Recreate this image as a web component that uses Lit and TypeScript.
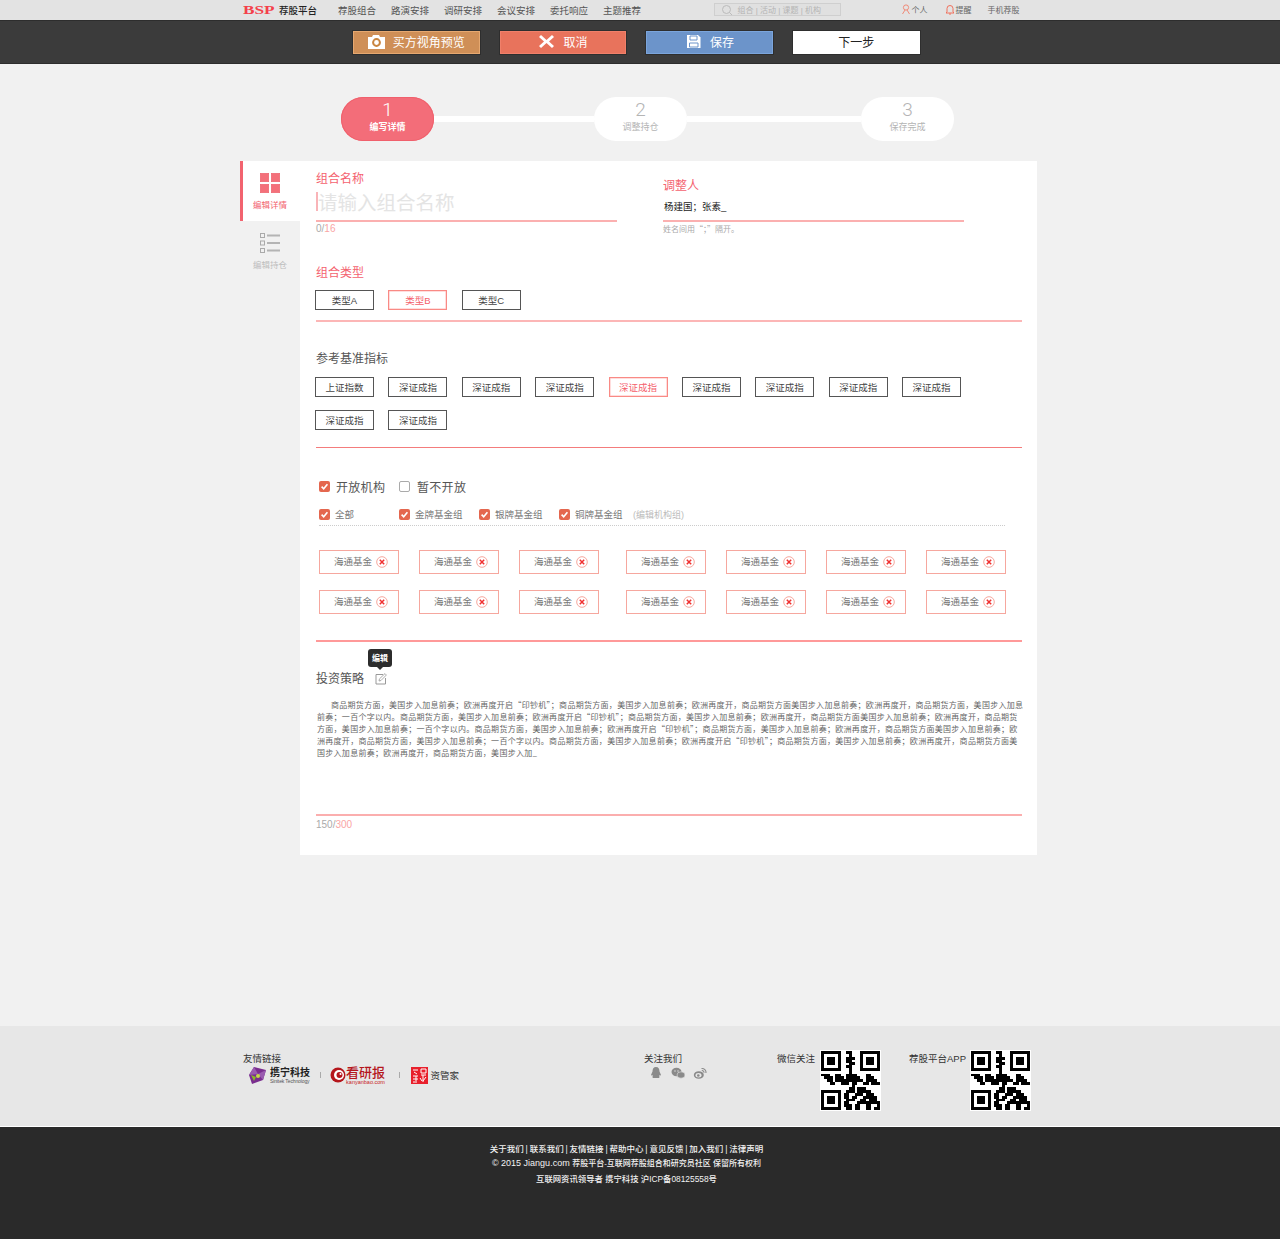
import { LitElement, html, css, svg } from "lit";
import { customElement } from "lit/decorators.js";

const QR = [
  "111111100110001111111",
  "100000100010001000001",
  "101110100111001011101",
  "101110100110001011101",
  "101110100011001011101",
  "100000100110001000001",
  "111111100010001111111",
  "000000000010000000000",
  "111001100111100011000",
  "011101110111110011100",
  "001101111111111011110",
  "000110011101100110111",
  "000000000001000000000",
  "000000000011011100000",
  "111111100111011111000",
  "100000101100111011100",
  "101110101101100111110",
  "101110100111001101110",
  "101110101100011111111",
  "100000101110110011001",
  "111111100110110011011",
];

const qr = () => html`<svg class="qr" viewBox="-0.5 -0.5 22 22" shape-rendering="crispEdges">
  <rect x="-0.5" y="-0.5" width="22" height="22" fill="#fff"></rect>
  ${QR.flatMap((row, y) =>
    [...row].map((c, x) => (c === "1" ? svg`<rect x=${x} y=${y} width="1.02" height="1.02" fill="#000"></rect>` : null))
  )}
</svg>`;

const check = (on = true) => html`<span class="cb ${on ? "on" : ""}">
  ${on ? html`<svg viewBox="0 0 11 11"><path d="M2.6 5.6 4.7 7.8 8.4 3.2" fill="none" stroke="#fff" stroke-width="1.6"></path></svg>` : ""}
</span>`;

const PARA = [
  "商品期货方面，美国步入加息前奏；欧洲再度开启“印钞机”；商品期货方面，美国步入加息前奏；欧洲再度开，商品期货方面美国步入加息前奏；欧洲再度开，商品期货方面，美国步入加息",
  "前奏；一百个字以内。商品期货方面，美国步入加息前奏；欧洲再度开启“印钞机”；商品期货方面，美国步入加息前奏；欧洲再度开，商品期货方面美国步入加息前奏；欧洲再度开，商品期货",
  "方面，美国步入加息前奏；一百个字以内。商品期货方面，美国步入加息前奏；欧洲再度开启“印钞机”；商品期货方面，美国步入加息前奏；欧洲再度开，商品期货方面美国步入加息前奏；欧",
  "洲再度开，商品期货方面，美国步入加息前奏；一百个字以内。商品期货方面，美国步入加息前奏；欧洲再度开启“印钞机”；商品期货方面，美国步入加息前奏；欧洲再度开，商品期货方面美",
  "国步入加息前奏；欧洲再度开，商品期货方面，美国步入加_",
];

@customElement("app-root")
export class AppRoot extends LitElement {
  static styles = css`
    :host {
      display: block;
      width: 1280px;
      background: #f1f1f1;
      font-family: "Liberation Sans", "Noto Sans CJK SC", sans-serif;
      color: #444;
    }
    .top {
      height: 20px;
      box-sizing: border-box;
      padding: 0 0 1px 243px;
      background: #e3e3e3;
      display: flex;
      align-items: center;
      font-size: 9.5px;
      color: #555;
      white-space: nowrap;
    }
    .bsp {
      width: 33px;
      font: 900 12.5px/12px "Liberation Serif", serif;
      color: #f4404a;
      transform: scaleX(1.38);
      transform-origin: left center;
    }
    .brand { margin-left: 3px; width: 59px; color: #222; font-weight: 500; }
    .nav { display: flex; gap: 15px; width: 376px; }
    .nav span { width: 38px; }
    .search {
      width: 119px;
      height: 11px;
      border: 1px solid #cfcfcf;
      background: #e0e0e0;
      display: flex;
      align-items: center;
      padding-left: 6px;
      box-sizing: content-box;
      margin: 0 60px 0 -0.5px;
      font-size: 8px;
      color: #b4b4b4;
    }
    .search svg { width: 12px; height: 12px; margin-right: 5px; }
    .uitem { display: flex; align-items: center; gap: 1px; font-size: 8px; color: #666; }
    .uitem svg { width: 10px; height: 11px; }
    .u1 { width: 44px; }
    .u2 { width: 43px; }

    .bar {
      height: 44px;
      background: #3b3b3b;
      display: flex;
      align-items: center;
      padding-left: 353px;
      gap: 20.2px;
      box-sizing: border-box;
      border-bottom: 1px solid #2d2d2d;
      border-top: 1px solid #2d2d2d;
    }
    .btn {
      width: 126.5px;
      height: 23px;
      box-sizing: border-box;
      border: 1px solid;
      padding-bottom: 1px;
      display: flex;
      align-items: center;
      justify-content: center;
      gap: 8px;
      color: #fff;
      font-size: 12px;
      box-shadow: 0 0 0 1px #2e2e2e;
    }
    .btn svg { width: 17px; height: 15px; }
    .b1 { background: #cf8f57; border-color: #e6a870; }
    .b2 { background: #e8735c; border-color: #f0806a; }
    .b3 { background: #6c94ca; border-color: #7ba5dc; }
    .b4 { background: #fff; border-color: #fff; color: #222; }

    .steps { display: flex; align-items: center; padding: 33px 0 20px 341px; }
    .pill {
      width: 93px;
      height: 44px;
      border-radius: 22px;
      background: #fff;
      display: flex;
      flex-direction: column;
      align-items: center;
      color: #b4b4b4;
      font-size: 9px;
      line-height: 12px;
    }
    .pill b { font: 300 19px/21px Roboto, sans-serif; margin-top: 2px; }
    .pill span { margin-top: 1px; }
    .pill.on { background: #f36d79; color: #fff; box-shadow: inset 0 0 0 1px #f0606c; }
    .pill.on span { font-weight: 700; }
    .pill.on b { color: #fff; }
    .conn { height: 6px; background: #fff; }

    .shell { display: flex; padding-left: 240px; margin-bottom: 171px; }
    .side { width: 60px; }
    .tab {
      height: 60px;
      box-sizing: border-box;
      padding-top: 11px;
      display: flex;
      flex-direction: column;
      align-items: center;
      font-size: 8.5px;
      line-height: 12px;
      color: #bdbdbd;
      gap: 5px;
    }
    .tab svg { width: 22px; height: 22px; }
    .tab.on { background: #fff; border-left: 3px solid #f2636f; color: #f2636f; padding-right: 3px; }
    .card {
      width: 737px;
      height: 694px;
      background: #fff;
      box-sizing: border-box;
      padding-left: 16px;
    }
    .inner { width: 706px; }
    .cols { display: flex; }
    .col1 { width: 301px; padding-top: 11px; margin-right: 46px; }
    .col2 { width: 301px; padding-top: 18px; }
    .lab { font-size: 12px; line-height: 14px; color: #f4626f; }
    .lab.dark { color: #555; }
    .name {
      height: 36px;
      box-sizing: border-box;
      border-bottom: 2px solid #fbb0b0;
      display: flex;
      align-items: center;
      font-size: 19.5px;
      color: #e4e4e4;
      padding-bottom: 3px;
    }
    .name i { width: 2px; height: 19px; background: #f9b4b8; }
    .peer {
      height: 29px;
      box-sizing: border-box;
      border-bottom: 2px solid #fbb0b0;
      display: flex;
      align-items: center;
      font-size: 9.5px;
      color: #222;
      padding: 0 0 1px 1px;
    }
    .count { font-size: 10px; line-height: 14px; color: #aaa; }
    .count em { font-style: normal; color: #f9a5a5; }
    .hint { font-family: "Noto Sans CJK SC", sans-serif; font-size: 8px; line-height: 14px; color: #aaa; }
    .chips { display: flex; flex-wrap: wrap; gap: 13px 14.4px; margin-left: -1px; }
    .chip {
      width: 59px;
      height: 20px;
      box-sizing: border-box;
      border: 1px solid #555;
      padding-bottom: 1px;
      display: flex;
      align-items: center;
      justify-content: center;
      font-size: 9.5px;
      color: #444;
    }
    .chip.on { border-color: #f98a85; color: #f4606c; box-shadow: inset 0 0 0 0.5px #fbb; }
    .rule { height: 1px; background: #f8a3a3; }
    .t-type { margin-top: 30px; }
    .c-type { margin-top: 10px; }
    .r-type { margin-top: 10px; height: 2px; background: #fcb6b6; }
    .t-bench { margin-top: 30px; }
    .c-bench { margin-top: 11px; }
    .r-bench { margin-top: 17px; background: #f47c7c; }
    .opens { display: flex; align-items: center; margin-top: 30px; height: 16px; font-size: 12px; color: #555; letter-spacing: 0.3px; padding-left: 3px; }
    .cb {
      width: 11px;
      height: 11px;
      box-sizing: border-box;
      border-radius: 2px;
      border: 1px solid #aaa;
      flex: none;
      display: block;
    }
    .cb.on { background: #e4674f; border: none; }
    .cb svg { display: block; width: 11px; height: 11px; }
    .o1 { margin-left: 6px; width: 63px; }
    .o2 { margin-left: 7px; }
    .groups { display: flex; align-items: center; margin-top: 14px; height: 12px; font-size: 9.5px; color: #777; padding-left: 3px; }
    .g { display: flex; align-items: center; width: 80px; gap: 5px; }
    .g.last { width: 74px; }
    .note { font-size: 9px; color: #bbb; }
    .dots { margin: 5px 17px 0 3px; border-top: 1px dotted #ccc; }
    .tags { display: flex; flex-wrap: wrap; gap: 16px 20px; margin: 24px 0 0 3px; width: 700px; }
    .tag {
      width: 80px;
      height: 24px;
      box-sizing: border-box;
      border: 1px solid #f6a79e;
      display: flex;
      align-items: center;
      padding-left: 14px;
      font-size: 9.5px;
      color: #777;
      gap: 4px;
    }
    .tag span { margin-top: -2px; }
    .tag:nth-child(7n + 4) { margin-left: 7px; }
    .tag svg { width: 12px; height: 12px; flex: none; }
    .r-tags { margin-top: 26px; height: 1.5px; background: #f99; }
    .strat { display: flex; align-items: center; margin-top: 30px; height: 14px; position: relative; }
    .strat .lab { width: 59px; }
    .strat svg { width: 12px; height: 12px; }
    .tip {
      position: absolute;
      left: 52px;
      top: -23px;
      width: 24px;
      height: 18px;
      border-radius: 3px;
      background: #2c2c2c;
      color: #fff;
      font-size: 8px;
      font-weight: 700;
      display: flex;
      align-items: center;
      justify-content: center;
    }
    .tip::after {
      content: "";
      position: absolute;
      left: 9px;
      bottom: -3px;
      border: 3px solid transparent;
      border-bottom: 0;
      border-top-color: #2c2c2c;
    }
    .para {
      margin: 13px 0 0 1px;
      height: 115px;
      font-family: "Noto Sans CJK SC", sans-serif;
      font-size: 8px;
      line-height: 12px;
      letter-spacing: 0.29px;
      color: #666;
      white-space: nowrap;
    }
    .para div:first-child { padding-left: 14px; }
    .r-para { height: 2px; background: #fbaeae; }
    .cnt2 { line-height: 18px; }

    .foot {
      height: 100px;
      background: #e7e7e7;
      box-sizing: border-box;
      padding: 24px 0 0 243px;
      display: flex;
      font-size: 9.5px;
      color: #333;
      white-space: nowrap;
    }
    .ftitle { line-height: 14px; margin-top: 2px; }
    .friends { width: 401px; }
    .logos { display: flex; align-items: center; height: 18px; padding-left: 5px; }
    .logos .gem { width: 19px; height: 18px; margin-right: 3px; }
    .stack { display: flex; flex-direction: column; align-items: stretch; line-height: 1; }
    .sin { width: 40px; }
    .sin b { font: 700 10px/13px "Liberation Serif", "Noto Sans CJK SC", serif; color: #222; }
    .sin small { font-size: 5px; line-height: 5px; color: #555; letter-spacing: -0.12px; white-space: nowrap; }
    .sep { width: 1px; height: 6px; background: #aaa; margin: 0 9.5px; }
    .circ { width: 16px; height: 16px; }
    .kan b { font: 500 13px/14px "Noto Sans CJK SC", serif; color: #b5161c; }
    .kan small { font-size: 5.5px; line-height: 6px; color: #c81e24; text-align: center; }
    .sep2 { margin: 0 11px 0 13.5px; }
    .seal { width: 17px; height: 17px; margin-right: 3px; }
    .zg { font-size: 9.5px; color: #333; }
    .follow { width: 133px; }
    .socials { display: flex; gap: 8px; margin-left: 5px; }
    .socials svg { width: 14px; height: 14px; }
    .qrblock { display: flex; }
    .qrblock.w { width: 132px; }
    .qrblock.w .ftitle { width: 43px; }
    .qrblock.a .ftitle { width: 61px; }
    .qr { width: 61px; height: 61px; display: block; flex: none; }
    .legal {
      height: 113px;
      border-top: 1px solid #fff;
      box-sizing: border-box;
      background: #2a2a2a;
      color: #f2f2f2;
      font-size: 8.5px;
      text-align: center;
      width: 1280px;
      padding: 16px 27px 0 0;
      font-weight: 500;
    }
    .legal div { height: 14px; line-height: 13px; }
    .legal .l1 { word-spacing: -0.5px; }
    .legal .l2 { height: 16px; font-size: 9px; }
    .legal .l2 span { font-size: 8px; }
    .legal .l3 { font-size: 8.35px; }
  `;

  render() {
    const bench = ["上证指数", ...Array(10).fill("深证成指")];
    const tags = Array(14).fill("海通基金");
    return html`
      <div class="top">
        <span class="bsp">BSP</span><span class="brand">荐股平台</span>
        <div class="nav">
          <span>荐股组合</span><span>路演安排</span><span>调研安排</span><span>会议安排</span><span>委托响应</span><span>主题推荐</span>
        </div>
        <div class="search">
          <svg viewBox="0 0 12 12"><circle cx="5.5" cy="5.5" r="4" fill="none" stroke="#bbb"></circle><path d="M8.5 8.5 11 11" stroke="#bbb"></path></svg>
          组合 | 活动 | 课题 | 机构
        </div>
        <div class="uitem u1">
          <svg viewBox="0 0 10 11"><circle cx="5" cy="3.5" r="2.6" fill="none" stroke="#f08a78"></circle><path d="M4 6 1.5 10M6 6l2.5 4" stroke="#f08a78" fill="none"></path></svg>个人
        </div>
        <div class="uitem u2">
          <svg viewBox="0 0 10 11"><path d="M2 8V4.5a3 3 0 0 1 6 0V8l1 1H1zM4 10h2" fill="none" stroke="#f0705c"></path></svg>提醒
        </div>
        <div class="uitem">手机荐股</div>
      </div>

      <div class="bar">
        <div class="btn b1">
          <svg viewBox="0 0 17 15"><path d="M0 3h4l1-2h6l1 2h5v12H0z" fill="#fff"></path><circle cx="8.5" cy="8.5" r="3.4" fill="none" stroke="#c9843f" stroke-width="2"></circle></svg>
          买方视角预览
        </div>
        <div class="btn b2">
          <svg viewBox="0 0 17 15"><path d="M3 1 8.5 6 14 1l2 2-5 4.500 5 4.500-2 2-5.500-5L3 14l-2-2 5-4.500L1 3z" fill="#fff"></path></svg>
          取消
        </div>
        <div class="btn b3">
          <svg viewBox="0 0 17 15"><path d="M2 1h11l2.500 2.500V14H2z" fill="#fff"></path><path d="M5 2h7v4H5zM4.500 9h8.500v4H4.500z" fill="none" stroke="#6c94ca"></path></svg>
          保存
        </div>
        <div class="btn b4">下一步</div>
      </div>

      <div class="steps">
        <div class="pill on"><b>1</b><span>编写详情</span></div>
        <div class="conn" style="width:160px"></div>
        <div class="pill"><b>2</b><span>调整持仓</span></div>
        <div class="conn" style="width:174px"></div>
        <div class="pill"><b>3</b><span>保存完成</span></div>
      </div>

      <div class="shell">
        <div class="side">
          <div class="tab on">
            <svg viewBox="0 0 22 22"><g fill="#f4707a" stroke="#ea5a66" stroke-width=".5"><rect x="1.250" y="1.250" width="8.500" height="8.500"></rect><rect x="12.250" y="1.250" width="8.500" height="8.500"></rect><rect x="1.250" y="12.250" width="8.500" height="8.500"></rect><rect x="12.250" y="12.250" width="8.500" height="8.500"></rect></g></svg>
            编辑详情
          </div>
          <div class="tab">
            <svg viewBox="0 0 22 22"><g fill="none" stroke="#aaa"><rect x="1.500" y="1.500" width="4" height="4"></rect><rect x="1.500" y="9" width="4" height="4"></rect><rect x="1.500" y="16.500" width="4" height="4"></rect></g><g fill="#b4b4b4"><rect x="8" y="2.500" width="13" height="2"></rect><rect x="8" y="10" width="13" height="2"></rect><rect x="8" y="17.500" width="13" height="2"></rect></g></svg>
            编辑持仓
          </div>
        </div>
        <div class="card">
          <div class="inner">
            <div class="cols">
              <div class="col1">
                <div class="lab">组合名称</div>
                <div class="name"><i></i>请输入组合名称</div>
                <div class="count">0/<em>16</em></div>
              </div>
              <div class="col2">
                <div class="lab">调整人</div>
                <div class="peer">杨建国；张素_</div>
                <div class="hint">姓名间用“；”隔开。</div>
              </div>
            </div>

            <div class="lab t-type">组合类型</div>
            <div class="chips c-type">
              <div class="chip">类型A</div><div class="chip on">类型B</div><div class="chip">类型C</div>
            </div>
            <div class="r-type"></div>

            <div class="lab dark t-bench">参考基准指标</div>
            <div class="chips c-bench">
              ${bench.map((b, i) => html`<div class="chip ${i === 4 ? "on" : ""}">${b}</div>`)}
            </div>
            <div class="rule r-bench"></div>

            <div class="opens">
              ${check()}<span class="o1">开放机构</span>${check(false)}<span class="o2">暂不开放</span>
            </div>
            <div class="groups">
              <div class="g">${check()}<span>全部</span></div>
              <div class="g">${check()}<span>金牌基金组</span></div>
              <div class="g">${check()}<span>银牌基金组</span></div>
              <div class="g last">${check()}<span>铜牌基金组</span></div>
              <span class="note">(编辑机构组)</span>
            </div>
            <div class="dots"></div>

            <div class="tags">
              ${tags.map(
                (t) => html`<div class="tag"><span>${t}</span>
                  <svg viewBox="0 0 12 12"><circle cx="6" cy="6" r="5.300" fill="#fff" stroke="#f6a79e"></circle><path d="M3.800 3.800 8.200 8.200M8.200 3.800 3.800 8.200" stroke="#f03030" stroke-width="1.500"></path></svg>
                </div>`
              )}
            </div>
            <div class="r-tags"></div>

            <div class="strat">
              <div class="lab dark">投资策略</div>
              <svg viewBox="0 0 12 12"><path d="M8 1.500H1v9.500h9.500V5" fill="none" stroke="#999"></path><path d="M4 8 4.500 5.800 10 .6l1.400 1.400L6 7.500z" fill="#fff" stroke="#999" stroke-width=".8"></path></svg>
              <div class="tip">编辑</div>
            </div>
            <div class="para">${PARA.map((l) => html`<div>${l}</div>`)}</div>
            <div class="r-para"></div>
            <div class="count cnt2">150/<em>300</em></div>
          </div>
        </div>
      </div>

      <div class="foot">
        <div class="friends">
          <div class="ftitle">友情链接</div>
          <div class="logos">
            <svg class="gem" viewBox="0 0 19 18"><path d="M6 1 18 4 15 14 4 18 1 9z" fill="#7a2d8f"></path><path d="M6 1 10 8 1 9zM10 8 18 4 15 14z" fill="#9a5bb0"></path><path d="M3 9l5 2-2 4z" fill="#8ab62a"></path><circle cx="10" cy="10" r="2" fill="#c6d84a"></circle></svg>
            <div class="stack sin"><b>携宁科技</b><small>Sinitek Technology</small></div>
            <span class="sep"></span>
            <svg class="circ" viewBox="0 0 16 16"><circle cx="8" cy="8" r="7.500" fill="#b5161c"></circle><circle cx="9" cy="8" r="5" fill="#fff"></circle><circle cx="9.500" cy="8" r="3" fill="#b5161c"></circle><circle cx="10.500" cy="7" r="1" fill="#fff"></circle></svg>
            <div class="stack kan"><b>看研报</b><small>kanyanbao.com</small></div>
            <span class="sep sep2"></span>
            <svg class="seal" viewBox="0 0 17 17"><rect width="17" height="17" fill="#e8202c"></rect><g stroke="#fff" stroke-width="1" fill="none"><path d="M2 3h5M3 5l3 2M2 9h5M2 12h5M5 9v5M10 2h5v4h-5zM10 8h5M12 8v7M15 10l-3 4M2 15h4M9 11l2 3"></path></g></svg>
            <span class="zg">资管家</span>
          </div>
        </div>
        <div class="follow">
          <div class="ftitle">关注我们</div>
          <div class="socials">
            <svg viewBox="0 0 14 14"><path d="M7 1c2.500 0 3.500 2 3.500 4.500L12 9l-1 .8-.8-1C10 10 11 11.500 10 12H4C3 11.500 4 10 3.800 8.800l-.8 1L2 9l1.500-3.500C3.500 3 4.500 1 7 1z" fill="#8a8a8a"></path></svg>
            <svg viewBox="0 0 14 14"><ellipse cx="5.500" cy="6" rx="5" ry="4.200" fill="#8a8a8a"></ellipse><ellipse cx="10" cy="9" rx="4" ry="3.200" fill="#8a8a8a" stroke="#e7e7e7" stroke-width=".6"></ellipse><circle cx="4" cy="5" r=".7" fill="#e7e7e7"></circle><circle cx="7" cy="5" r=".7" fill="#e7e7e7"></circle></svg>
            <svg viewBox="0 0 14 14"><ellipse cx="5.800" cy="9" rx="5" ry="3.800" fill="#8a8a8a"></ellipse><ellipse cx="5.500" cy="9.300" rx="3" ry="2.200" fill="#e7e7e7"></ellipse><circle cx="5.300" cy="9.500" r="1.300" fill="#8a8a8a"></circle><path d="M8.500 2.500a4 4 0 0 1 4.500 4.500M8.800 4.500A2 2 0 0 1 11 6.700" fill="none" stroke="#8a8a8a" stroke-width="1.100"></path></svg>
          </div>
        </div>
        <div class="qrblock w">
          <div class="ftitle">微信关注</div>
          ${qr()}
        </div>
        <div class="qrblock a">
          <div class="ftitle">荐股平台APP</div>
          ${qr()}
        </div>
      </div>
      <div class="legal">
        <div class="l1">关于我们 | 联系我们 | 友情链接 | 帮助中心 | 意见反馈 | 加入我们 | 法律声明</div>
        <div class="l2">© 2015 Jiangu.com <span>荐股平台-互联网荐股组合和研究员社区 保留所有权利</span></div>
        <div class="l3">互联网资讯领导者 携宁科技 沪ICP备08125558号</div>
      </div>
    `;
  }
}
